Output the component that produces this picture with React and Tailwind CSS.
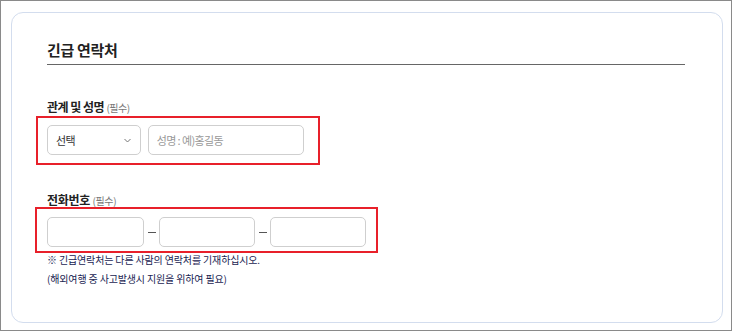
export default function App() {
  const font = { fontFamily: '"Noto Sans CJK KR", "Noto Sans", sans-serif' };

  return (
    <div className="w-[732px] h-[331px] bg-white border border-[#8a8a8a] pt-[11px] pl-[10px]" style={font}>
      <div className="w-[712px] h-[311px] border border-[#d3ddee] rounded-[12px] pl-[35px] pr-[37px] pt-[27px]">
        {/* 제목 */}
        <div className="border-b border-[#666] pb-[4px]">
          <h2 className="text-[15px] leading-[20px] font-bold text-[#222] tracking-[-0.3px]">긴급 연락처</h2>
        </div>

        {/* 관계 및 성명 */}
        <div className="mt-[34px] text-[12px] leading-[16px] font-bold text-[#222] tracking-[-0.5px]">
          관계 및 성명 <span className="text-[10px] font-normal text-[#777]">(필수)</span>
        </div>
        <div className="-ml-[11px] w-[284px] border-2 border-[#e8202a] pl-[9px] pr-[14px] pt-[7px] pb-[8px] flex gap-[7px]">
          <div className="w-[94px] h-[30px] border border-[#cfcfcf] rounded-[5px] flex items-center justify-between pl-[8px] pr-[9px]">
            <span className="text-[11px] text-[#333] tracking-[-0.5px]">선택</span>
            <svg width="7" height="5" viewBox="0 0 7 5" fill="none">
              <path d="M0.5 1 L3.5 4 L6.5 1" stroke="#777" strokeWidth="1" />
            </svg>
          </div>
          <input
            className="w-[157px] h-[30px] border border-[#cfcfcf] rounded-[5px] px-[8px] text-[11px] tracking-[-0.6px] placeholder:text-[#999] outline-none"
            placeholder="성명 : 예)홍길동"
          />
        </div>

        {/* 전화번호 */}
        <div className="mt-[29px] text-[12px] leading-[12px] font-bold text-[#222] tracking-[-0.3px]">
          전화번호 <span className="text-[10px] font-normal text-[#777]">(필수)</span>
        </div>
        <div className="-ml-[12px] w-[343px] border-2 border-[#e8202a] pl-[10px] pr-[10px] pt-[8px] pb-[4px] flex items-center">
          <input className="w-[97px] h-[30px] border border-[#cfcfcf] rounded-[5px] outline-none" />
          <span className="w-[16px] flex justify-center">
            <span className="w-[8px] h-px bg-[#555]" />
          </span>
          <input className="w-[96px] h-[30px] border border-[#cfcfcf] rounded-[5px] outline-none" />
          <span className="w-[16px] flex justify-center">
            <span className="w-[8px] h-px bg-[#555]" />
          </span>
          <input className="w-[96px] h-[30px] border border-[#cfcfcf] rounded-[5px] outline-none" />
        </div>

        <p className="mt-0 text-[10px] leading-[14px] text-[#1a2452] tracking-[-0.15px]">
          ※ 긴급연락처는 다른 사람의 연락처를 기재하십시오.
        </p>
        <p className="mt-[5px] text-[10px] leading-[14px] text-[#1a2452] tracking-[-0.15px]">
          (해외여행 중 사고발생시 지원을 위하여 필요)
        </p>
      </div>
    </div>
  );
}
